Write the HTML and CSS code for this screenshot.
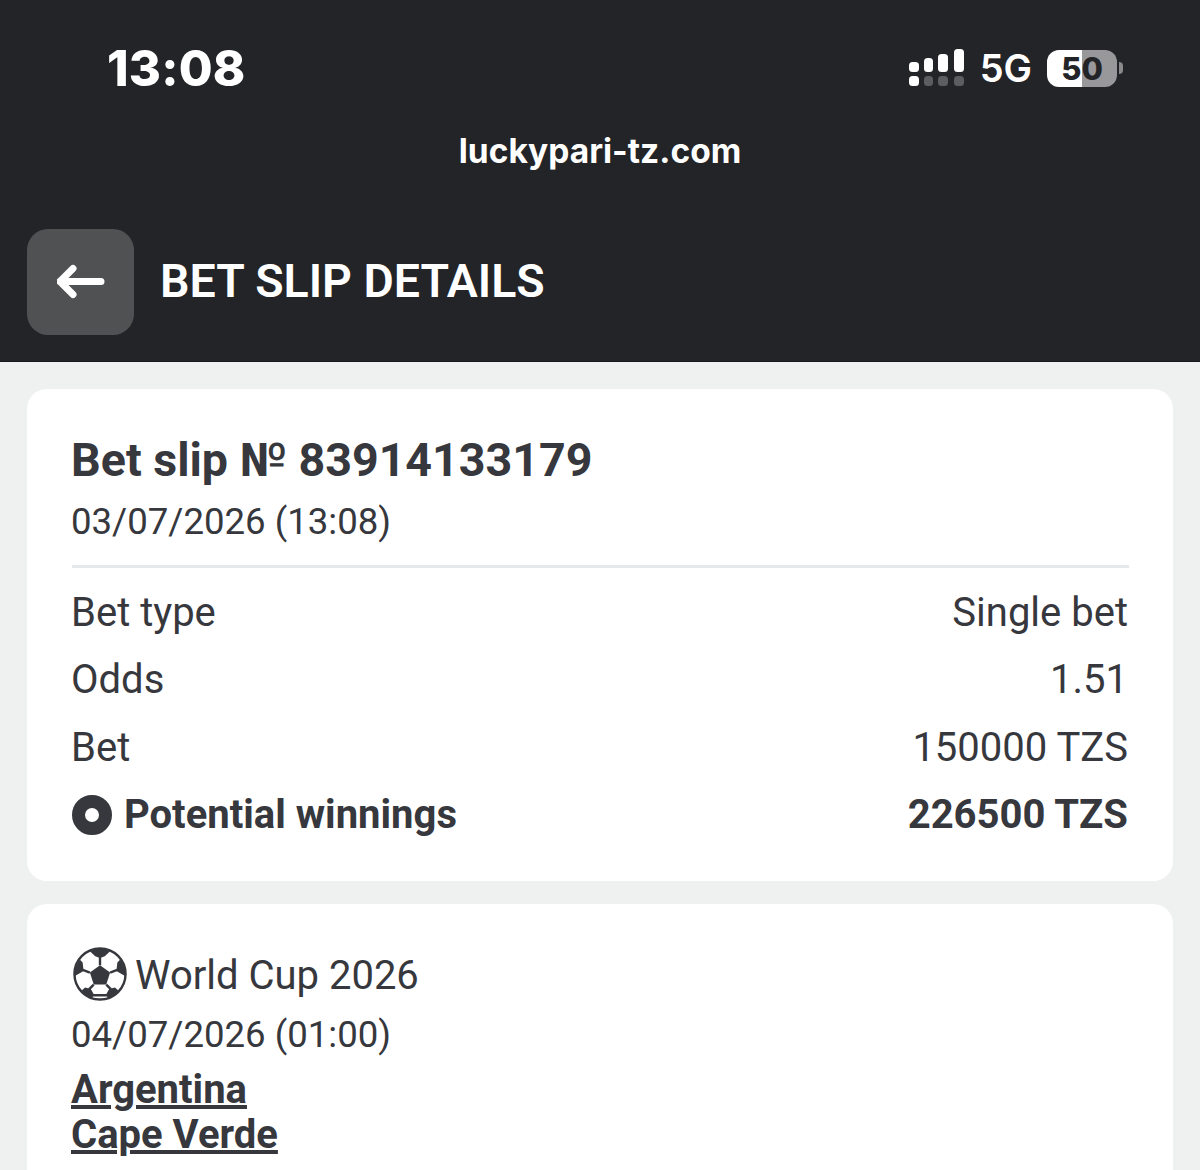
FILE: index.html
```html
<!DOCTYPE html>
<html lang="en">
<head>
  <meta charset="UTF-8" />
  <meta name="viewport" content="width=device-width, initial-scale=1.0" />
  <title>Bet slip details</title>
  <link rel="stylesheet" href="styles.css">
</head>
<body>
  <div class="top">
    <div class="status">
      <div class="clock">13:08</div>
      <div class="status-right">
        <svg class="signal" width="56" height="40" viewBox="0 0 56 40">
          <rect x="0" y="14" width="10" height="10" rx="3.5" fill="#fff"/>
          <rect x="15" y="10" width="9" height="14" rx="3.5" fill="#fff"/>
          <rect x="29" y="6" width="10" height="18" rx="3.5" fill="#fff"/>
          <rect x="45" y="1" width="10" height="23" rx="3.5" fill="#fff"/>
          <rect x="0" y="28" width="10" height="10" rx="3.5" fill="#fff"/>
          <rect x="15" y="28" width="9" height="10" rx="3.5" fill="#5c5d5f"/>
          <rect x="29" y="28" width="10" height="10" rx="3.5" fill="#5c5d5f"/>
          <rect x="45" y="28" width="10" height="10" rx="3.5" fill="#5c5d5f"/>
        </svg>
        <div class="net">5G</div>
        <div class="battery">
          <div class="battery-body"><span class="battery-level">50</span></div>
          <div class="battery-cap"></div>
        </div>
      </div>
    </div>
    <div class="domain">luckypari-tz.com</div>
    <div class="head">
      <div class="back">
        <svg width="48" height="36" viewBox="0 0 48 36">
          <path d="M44 17.500H3M16 4.500L3 17.500l13 13" fill="none" stroke="#fff" stroke-width="7" stroke-linecap="round" stroke-linejoin="round"/>
        </svg>
      </div>
      <div class="head-title">BET SLIP DETAILS</div>
    </div>
  </div>

  <div class="content">
    <div class="card summary">
      <h2>Bet slip № 83914133179</h2>
      <div class="date">03/07/2026 (13:08)</div>
      <div class="rows">
        <div class="row"><span class="row-name">Bet type</span><span>Single bet</span></div>
        <div class="row"><span class="row-name">Odds</span><span>1.51</span></div>
        <div class="row stake"><span class="row-name">Bet</span><span>150000 TZS</span></div>
        <div class="row total">
          <span class="total-label"><i class="dot"></i>Potential winnings</span>
          <span>226500 TZS</span>
        </div>
      </div>
    </div>

    <div class="card event">
      <div class="league">
        <svg class="ball" width="54" height="54" viewBox="0 0 56 56">
          <circle cx="28" cy="28" r="26.500" fill="#fff" stroke="#36383d" stroke-width="2.500"/>
          <path d="M28 19l10.500 7.500-4 12.500h-13l-4-12.500z" fill="#36383d"/>
          <path d="M17 4C24 1 32 1 39 4l-6 5.500-5 2-5-2z" fill="#36383d"/>
          <path d="M2 30c-.4-6 1.500-12 5-17l3 3 1 9z" fill="#36383d"/>
          <path d="M54 30c.4-6-1.500-12-5-17l-3 3-1 9z" fill="#36383d"/>
          <path d="M9 45c3 3.500 6.500 6.500 11 8l1.500-4-3-5.500-6-1.500z" fill="#36383d"/>
          <path d="M47 45c-3 3.500-6.500 6.500-11 8l-1.500-4 3-5.500 6-1.500z" fill="#36383d"/>
          <path d="M28 10v9M17.500 26.500l-8-3M38.500 26.500l8-3M21.500 39l-5 5M34.500 39l5 5M20 50h16" fill="none" stroke="#36383d" stroke-width="2.500"/>
        </svg>
        <span class="league-name">World Cup 2026</span>
      </div>
      <div class="date event-date">04/07/2026 (01:00)</div>
      <div class="teams">
        <a href="#">Argentina</a>
        <a href="#">Cape Verde</a>
      </div>
    </div>
  </div>
</body>
</html>
```

FILE: styles.css
```css
body {
  margin: 0;
  padding: 0;
  height: 1170px;
  overflow: hidden;
  background-color: #eff1f0;
  color: #36383d;
  font-family: Roboto, sans-serif;
}

.top {
  background-color: #232427;
  color: #fff;
  height: 362px;
  border-bottom: 1px solid #17181a;
  box-sizing: border-box;
}

.status {
  display: flex;
  justify-content: space-between;
  align-items: center;
  height: 136px;
  padding: 0 77px 0 107px;
}

.clock {
  font-family: Inter, sans-serif;
  font-size: 49px;
  font-weight: 800;
  letter-spacing: 0.2px;
}

.status-right {
  display: flex;
  align-items: center;
}

.signal {
  margin-right: 15px;
}

.net {
  font-family: Inter, sans-serif;
  font-size: 38px;
  font-weight: 600;
  margin-right: 15px;
}

.battery {
  display: flex;
  align-items: center;
}

.battery-body {
  width: 70px;
  height: 37px;
  border-radius: 12px;
  background: linear-gradient(to right, #fff 0, #fff 50%, #98989a 50%, #98989a 100%);
  display: flex;
  align-items: center;
  justify-content: center;
}

.battery-level {
  font-family: Inter, sans-serif;
  font-size: 31px;
  font-weight: 800;
  color: #232427;
}

.battery-cap {
  width: 4px;
  height: 12px;
  margin-left: 2px;
  border-radius: 0 6px 6px 0;
  background-color: #8a8a8c;
}

.domain {
  margin-top: -5px;
  text-align: center;
  font-family: Inter, sans-serif;
  font-size: 33.500px;
  font-weight: 700;
  line-height: 40px;
}

.head {
  display: flex;
  align-items: center;
  gap: 27px;
  padding: 58px 27px 0;
}

.back {
  width: 107px;
  height: 106px;
  border-radius: 21px;
  background-color: #505153;
  display: flex;
  align-items: center;
  justify-content: center;
}

.head-title {
  font-size: 46.500px;
  font-weight: 600;
  margin: -2px 0 0 -1px;
}

.content {
  padding: 27px 27px 0;
}

.card {
  background-color: #fff;
  border-radius: 20px;
  padding: 0 45px;
  margin-bottom: 23px;
  box-sizing: border-box;
}

.summary {
  height: 492px;
  padding-top: 43px;
}

h2 {
  margin: 0 0 0 -1px;
  font-size: 46.600px;
  font-weight: 700;
  line-height: 56px;
}

.date {
  font-size: 36.600px;
  line-height: 46px;
  margin-top: 11px;
  margin-left: -1px;
}

.rows {
  margin: 20px -1px 0 0;
  padding: 11px 1px 0 0;
  border-top: 3px solid #e7e8ea;
}

.row {
  display: flex;
  justify-content: space-between;
  font-size: 40px;
  line-height: 67px;
}

.row-name {
  margin-left: -1px;
}

.stake {
  margin-top: 1px;
}

.total {
  font-weight: 700;
}

.total-label {
  display: flex;
  align-items: center;
}

.dot {
  width: 14px;
  height: 14px;
  border: 13px solid #36383d;
  border-radius: 50%;
  margin-right: 12px;
}

.event {
  height: 266px;
  margin-bottom: 0;
  padding-top: 43px;
  border-radius: 20px 20px 0 0;
  overflow: hidden;
}

.league {
  display: flex;
  align-items: center;
  gap: 8px;
  font-size: 40px;
  margin-left: -1px;
}

.league-name {
  margin-top: 2px;
}

.ball {
  margin-left: 2px;
}

.event-date {
  margin-top: 11px;
}

.teams {
  display: flex;
  flex-direction: column;
  margin-top: 9px;
  margin-left: -1px;
}

.teams a {
  color: #36383d;
  font-size: 40px;
  font-weight: 700;
  line-height: 45px;
}
```
